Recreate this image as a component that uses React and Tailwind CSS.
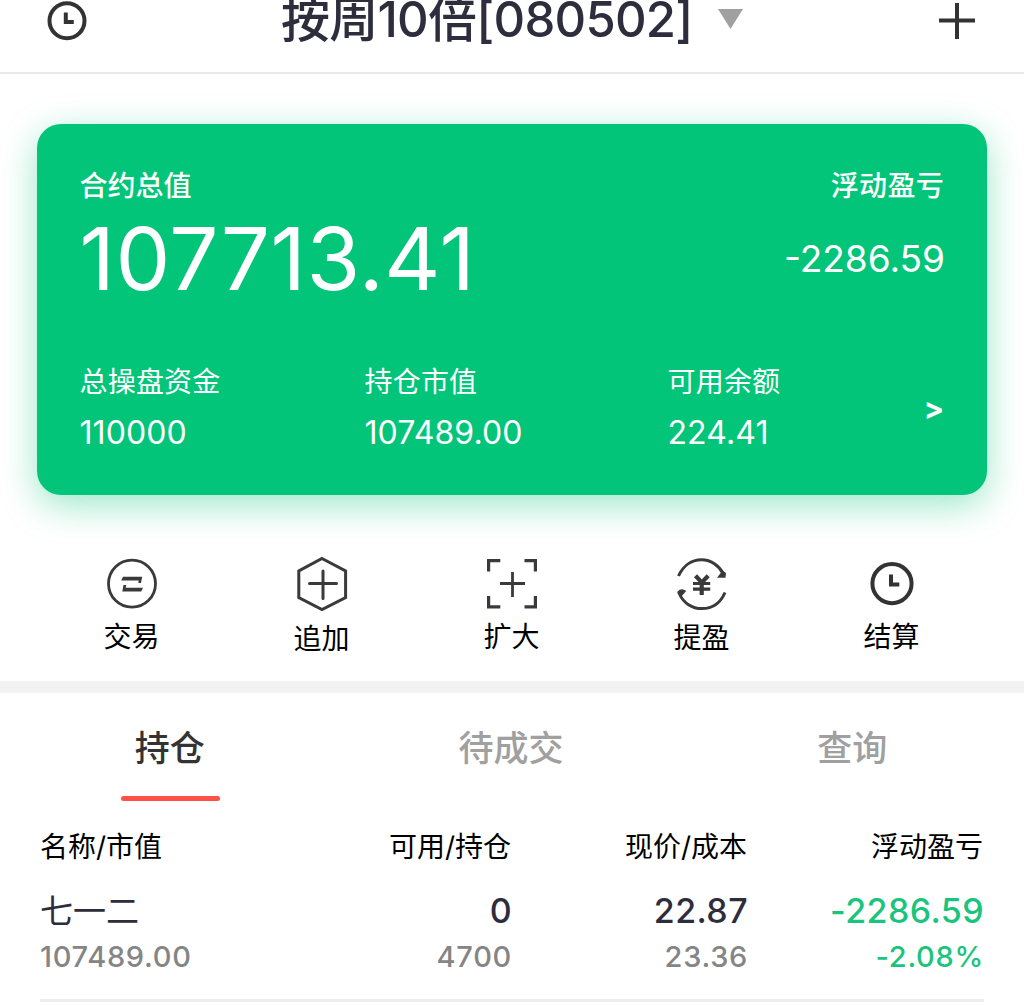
const ACTIONS = [
  { label: "交易", Icon: TradeIcon, className: "mt-[5px]" },
  { label: "追加", Icon: AppendIcon, className: "mt-[7px]" },
  { label: "扩大", Icon: ExpandIcon, className: "mt-[5px]" },
  { label: "提盈", Icon: ProfitIcon, className: "mt-[6px]" },
  { label: "结算", Icon: SettleIcon, className: "mt-[5px]" },
];

const TABS = ["持仓", "待成交", "查询"];

const COLUMNS = ["名称/市值", "可用/持仓", "现价/成本", "浮动盈亏"];

function HeaderClockIcon() {
  return (
    <svg width="40" height="40" viewBox="0 0 40 40" fill="none" stroke="#333" strokeWidth="4">
      <circle cx="20" cy="19.700" r="17.500" />
      <path d="M18.800 11.500v9.500h8" />
    </svg>
  );
}

function PlusIcon() {
  return (
    <svg width="36" height="36" viewBox="0 0 36 36" fill="none" stroke="#333" strokeWidth="4">
      <path d="M18 0v36M0 17.500h36" />
    </svg>
  );
}

function TradeIcon() {
  return (
    <svg width="56" height="56" viewBox="0 0 56 56" fill="none" stroke="#3a3a3a">
      <circle cx="28" cy="27.700" r="23.500" strokeWidth="2.800" />
      <path d="M19 20.800H38.200L37 27H34.200L34.800 24.500H17.200Z" fill="#3a3a3a" stroke="none" />
      <path d="M19.500 29H22.200L21.700 31.700H39L37.200 35.600H18.300Z" fill="#3a3a3a" stroke="none" />
    </svg>
  );
}

function AppendIcon() {
  return (
    <svg width="56" height="56" viewBox="0 0 56 56" fill="none" stroke="#3a3a3a" strokeWidth="3">
      <path d="M28 2.500L51.600 15v26.500L28 53.500L4.800 41.500V15Z" />
      <path d="M29 15v27.500M15.500 27.600h27" strokeLinecap="round" />
    </svg>
  );
}

function ExpandIcon() {
  return (
    <svg width="56" height="56" viewBox="0 0 56 56" fill="none" stroke="#3a3a3a" strokeWidth="3.200">
      <path d="M4.600 15.500V4.600h11.700M40.500 4.600h10.900V15.500M4.600 40v10.900h11.700M40.500 50.900h10.900V40" />
      <path d="M28.500 16v25M16 27.500h25" strokeWidth="2.800" />
    </svg>
  );
}

function ProfitIcon() {
  return (
    <svg width="56" height="56" viewBox="0 0 56 56" fill="none" stroke="#3a3a3a" strokeWidth="3">
      <path d="M4.500 20C9 10 17.500 3.800 27.500 3.800C37.500 3.800 45.500 10 49.500 18" />
      <path d="M51 36.500C46.500 47 38 52.600 28 52.600C18 52.600 9.500 47 5.500 38" />
      <path d="M43 21.700L48.500 14.500L52 17L51.500 21.700Z" fill="#3a3a3a" stroke="none" />
      <path d="M12.200 35L6.500 41.500L3.300 37L3.600 35.500Q7.500 31.500 12.200 35Z" fill="#3a3a3a" stroke="none" />
      <path d="M21.500 19.800L27.800 26.500L34.200 19.800M27.700 26v13" strokeWidth="4.200" />
      <path d="M19 27.500h17.200M19 33.200h17.200" strokeWidth="3.200" />
    </svg>
  );
}

function SettleIcon() {
  return (
    <svg width="56" height="56" viewBox="0 0 56 56" fill="none" stroke="#333" strokeWidth="4">
      <circle cx="28" cy="27.600" r="19.600" />
      <path d="M27 18.500V28.400h8.300" />
    </svg>
  );
}

function Header() {
  return (
    <header className="flex h-[74px] items-start border-b-2 border-[#e9e9e9] pl-[47px]">
      <div className="w-[234px] pt-px">
        <HeaderClockIcon />
      </div>
      <h1 className="h-10 w-[437px] whitespace-nowrap text-[49px] leading-10 font-[450] tracking-[-0.75px] text-[#2e2d3d]">
        按周10倍[080502]
      </h1>
      <svg className="mt-[9px]" width="25" height="20" viewBox="0 0 25 20" fill="#a0a0a0">
        <path d="M0 0h25L12.500 20Z" />
      </svg>
      <div className="ml-auto pt-[3px] pr-[49px]">
        <PlusIcon />
      </div>
    </header>
  );
}

function Stat({ label, value, className }) {
  return (
    <div className={className}>
      <div className="h-10 text-[28px] leading-10 tracking-[0.2px]">{label}</div>
      <div className="mt-[11px] h-10 text-[32px] leading-10 tracking-[0.1px]">{value}</div>
    </div>
  );
}

function SummaryCard() {
  return (
    <section className="mx-[37px] mt-[50px] h-[371px] rounded-[24px] bg-[#02c57a] pr-[43px] pl-[42.5px] pt-[42px] text-white shadow-[0_10px_36px_rgba(3,198,122,0.4)]">
      <div className="flex justify-between font-medium">
        <span className="h-10 text-[28px] leading-10">合约总值</span>
        <span className="h-10 text-[28px] leading-10 tracking-[0.3px]">浮动盈亏</span>
      </div>
      <div className="flex justify-between">
        <span className="h-[104px] text-[87px] leading-[106px] tracking-[0.55px]">107713.41</span>
        <span className="-mr-px mt-[29px] h-12 text-[37px] leading-12">-2286.59</span>
      </div>
      <div className="mt-[52px] flex items-start">
        <Stat className="w-[285px]" label="总操盘资金" value="110000" />
        <Stat className="w-[303px]" label="持仓市值" value="107489.00" />
        <Stat label="可用余额" value="224.41" />
        <span className="mt-[26px] ml-auto h-10 text-[30px] leading-10 font-bold">&gt;</span>
      </div>
    </section>
  );
}

function ActionBar() {
  return (
    <nav className="mx-[37px] mt-[61px] grid h-[125px] grid-cols-5">
      {ACTIONS.map(({ label, Icon, className }) => (
        <button key={label} className="flex flex-col items-center text-[28px] leading-10 text-black">
          <Icon />
          <span className={`pr-px ${className}`}>{label}</span>
        </button>
      ))}
    </nav>
  );
}

function Tabs() {
  return (
    <div className="grid h-[109px] grid-cols-3 text-center text-[35px] font-medium">
      {TABS.map((tab, i) => (
        <div key={tab} className={i === 0 ? "flex flex-col items-center text-[#333]" : "flex flex-col items-center text-[#a0a0a0]"}>
          <span className="mt-[30px] h-[49px] pr-0.5 leading-[50px]">{tab}</span>
          {i === 0 && <span className="mt-6 h-[5px] w-[99px] rounded-full bg-[#ff5145]" />}
        </div>
      ))}
    </div>
  );
}

function Positions() {
  return (
    <section className="mx-10 border-b-3 border-[#eee]">
      <div className="mt-[25px] grid h-10 grid-cols-4 text-right text-[28px] leading-10 text-black">
        {COLUMNS.map((col) => (
          <span key={col} className="pr-px first:text-left">
            {col}
          </span>
        ))}
      </div>
      <div className="mt-6 grid h-10 grid-cols-4 text-right text-[34px] leading-10 font-[450] tracking-[0.4px] text-[#2e2d3d]">
        <span className="text-left text-[33px] font-normal tracking-normal">七一二</span>
        <span>0</span>
        <span>22.87</span>
        <span className="text-[#1bc47d]">-2286.59</span>
      </div>
      <div className="mt-[6px] grid h-[62px] grid-cols-4 text-right text-[29px] leading-10 font-[450] tracking-[0.7px] text-[#858585]">
        <span className="text-left">107489.00</span>
        <span>4700</span>
        <span>23.36</span>
        <span className="text-[#1bc47d]">-2.08%</span>
      </div>
    </section>
  );
}

export default function App() {
  return (
    <div className="h-[1006px] w-[1024px] overflow-hidden bg-white font-['Inter','Noto_Sans_CJK_SC',sans-serif]">
      <Header />
      <SummaryCard />
      <ActionBar />
      <div className="h-3 bg-[#f2f2f2]" />
      <Tabs />
      <Positions />
    </div>
  );
}
